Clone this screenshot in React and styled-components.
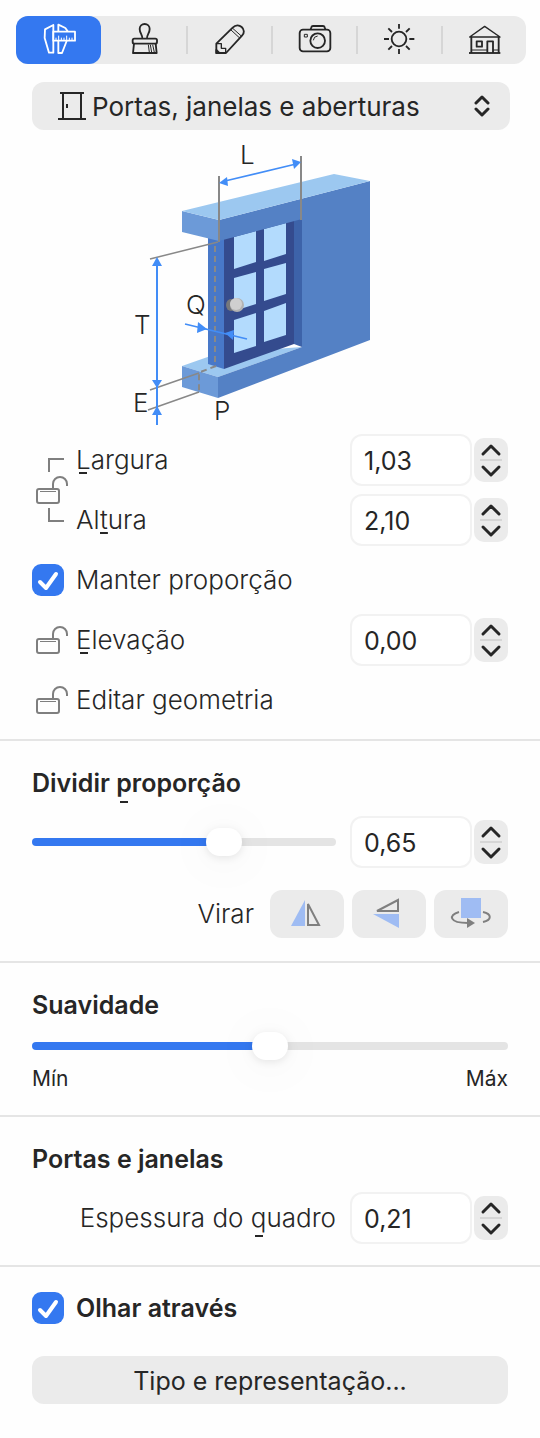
import React from "react";
import styled, { createGlobalStyle, css } from "styled-components";

const GlobalStyle = createGlobalStyle`
  * {
    box-sizing: border-box;
  }
  body {
    margin: 0;
    background: #fefefe;
    color: #262626;
    font-family: Inter, "Liberation Sans", sans-serif;
    font-size: 25px;
  }
  button, input, select {
    font: inherit;
    color: inherit;
    margin: 0;
  }
`;

const Panel = styled.main`
  padding-top: 16px;
`;

const Toolbar = styled.div`
  display: grid;
  grid-template-columns: repeat(6, 1fr);
  height: 48px;
  margin: 0 14px 18px 16px;
  border-radius: 12px;
  background: #ebebeb;
`;

const Tab = styled.button`
  display: flex;
  align-items: center;
  justify-content: center;
  padding: 0;
  border: 0;
  border-radius: 12px;
  background: ${(props) => (props.$active ? "#3478f0" : "transparent")};
  color: ${(props) => (props.$active ? "#fff" : "#262626")};
  ${(props) =>
    props.$divider &&
    css`
      border-radius: 0;
      background: linear-gradient(#d6d6d6, #d6d6d6) left center / 2px 28px no-repeat;
    `}
`;

const TabSvg = styled.svg`
  width: 34px;
  height: 34px;
  overflow: visible;
  fill: none;
  stroke: currentColor;
  stroke-width: 5.5;
  stroke-linejoin: round;
`;

const SelectBox = styled.div`
  position: relative;
  margin: 0 30px 10px 32px;
`;

const Select = styled.select`
  appearance: none;
  display: block;
  width: 100%;
  height: 48px;
  padding: 0 48px 0 60px;
  border: 0;
  border-radius: 12px;
  background: #ebebeb;
  font-size: 26px;
`;

const SelectIcon = styled.svg`
  position: absolute;
  top: 50%;
  transform: translateY(-50%);
  ${(props) => props.$side}: ${(props) => (props.$side === "left" ? 26 : 20)}px;
  pointer-events: none;
  fill: none;
  stroke: #262626;
`;

const Drawing = styled.svg`
  display: block;
  margin: 0 auto;
  font-size: 26px;
  font-weight: 300;
  fill: #262626;
`;

const Section = styled.section`
  padding: ${(props) => props.$top ?? 26}px 32px ${(props) => props.$bottom}px;
  & + & {
    border-top: 2px solid #e5e5e5;
  }
`;

const Title = styled.h2`
  margin: 0;
  font-size: 25px;
  line-height: 32px;
  font-weight: 600;
`;

const Row = styled.div`
  display: flex;
  align-items: center;
  height: 60px;
`;

const SpacedRow = styled(Row)`
  margin-top: 13px;
  gap: 14px;
`;

const Linked = styled.div`
  display: grid;
  grid-template-columns: 44px 1fr;
`;

const LinkCell = styled.div`
  display: flex;
  align-items: center;
  padding-left: 4px;
`;

const Label = styled.label`
  flex: ${(props) => (props.$end ? "1" : "0 1 auto")};
  margin-right: ${(props) => (props.$end ? "0" : "auto")};
  line-height: 32px;
  text-align: ${(props) => (props.$end ? "right" : "left")};
  font-size: ${(props) => (props.$bold ? 25 : 26)}px;
  font-weight: ${(props) => (props.$bold ? 600 : 300)};
`;

// short mnemonic dash, placed lower for letters with a descender
const Key = styled.u`
  padding-bottom: 6px;
  text-decoration: none;
  background: linear-gradient(#262626, #262626) center ${(props) => (props.$low ? 33 : 28)}px / 8px 2px
    no-repeat;
`;

const Lock = styled.button`
  display: flex;
  flex: none;
  width: 44px;
  padding: 0 0 0 4px;
  border: 0;
  background: none;
`;

const LineSvg = styled.svg`
  display: block;
  fill: none;
  stroke: #7f7f7f;
  stroke-width: 2;
`;

const Spinner = styled.div`
  display: flex;
  flex: none;
  align-items: center;
  gap: 2px;
`;

const Field = styled.input`
  width: 122px;
  height: 52px;
  padding: 2px 12px 0;
  border: 2px solid #f2f2f2;
  border-radius: 12px;
  background: #fff;
`;

const Stepper = styled.div`
  width: 34px;
  border-radius: 10px;
  background: linear-gradient(#d6d6d6, #d6d6d6) center / 22px 2px no-repeat #ebebeb;
`;

const Step = styled.button`
  display: block;
  width: 34px;
  height: 22px;
  padding: 0;
  border: 0;
  background: none;
`;

const StepSvg = styled.svg`
  display: block;
  fill: none;
  stroke: #262626;
  stroke-width: 3;
  stroke-linecap: round;
  stroke-linejoin: round;
`;

const CheckBox = styled.span`
  display: grid;
  flex: none;
  margin-right: 12px;
  & > * {
    grid-area: 1 / 1;
  }
`;

const CheckInput = styled.input`
  appearance: none;
  width: 32px;
  height: 32px;
  border-radius: 9px;
  background: #dcdcdc;
  &:checked {
    background: #3478f0;
  }
`;

const CheckMark = styled.svg`
  pointer-events: none;
  visibility: hidden;
  fill: none;
  stroke: #fff;
  stroke-width: 4;
  stroke-linecap: round;
  stroke-linejoin: round;
  input:checked + & {
    visibility: visible;
  }
`;

const Range = styled.input`
  appearance: none;
  display: block;
  flex: 1;
  width: 100%;
  min-width: 0;
  height: 28px;
  background: none;
  &::-webkit-slider-runnable-track {
    height: 8px;
    border-radius: 4px;
    background: linear-gradient(to right, #3478f0 var(--fill), #e4e4e4 var(--fill));
  }
  &::-webkit-slider-thumb {
    appearance: none;
    width: 36px;
    height: 28px;
    margin-top: -10px;
    border-radius: 14px;
    background: #fff;
    box-shadow: 0 2px 8px #00000018, 0 4px 50px 8px #00000008;
  }
`;

const Smoothness = styled.div`
  margin-top: 11px;
`;

const Ends = styled.div`
  display: flex;
  justify-content: space-between;
  margin-top: 4px;
  font-size: 21px;
  line-height: 30px;
`;

const FlipRow = styled.div`
  display: flex;
  align-items: center;
  justify-content: flex-end;
  gap: 8px;
  margin-top: 18px;
`;

const FlipText = styled.span`
  margin-right: 8px;
  font-size: 26px;
  line-height: 32px;
  font-weight: 300;
`;

const FlipButton = styled.button`
  width: 74px;
  height: 48px;
  padding: 0;
  border: 0;
  border-radius: 12px;
  background: #ebebeb;
`;

const FlipSvg = styled.svg`
  display: block;
`;

const WideButton = styled.button`
  display: block;
  width: 100%;
  height: 48px;
  margin-top: 18px;
  padding: 2px 0 0;
  border: 0;
  border-radius: 12px;
  background: #ebebeb;
`;

const tabs = [
  {
    name: "Dimensões",
    icon: (
      <>
        <path d="M36 7L11 20L10 46L23 90H36z" />
        <path d="M51 27V6L72 16L79 26M51 55V91H62L76 55" />
        <path d="M36 27H101V54H36z" fill="#3478f0" />
        <path d="M44 53V45M52 53V39M60 53V45M68 53V45M76 53V39M84 53V45M92 53V45" strokeWidth="3" />
      </>
    ),
  },
  {
    name: "Materiais",
    icon: (
      <>
        <path d="M48 48C49 36 40 32 40 19A15 15 0 0 1 70 19C70 32 61 36 62 48" />
        <rect x="19" y="48" width="73" height="15" rx="5" />
        <path d="M23 63L20 91H91L88 63" />
        <path d="M66 66L69 89M72 66L76 89M79 66L84 89" strokeWidth="3" />
      </>
    ),
  },
  {
    name: "Editar",
    icon: (
      <>
        <path d="M15 91V63L64 15C73 6 84 7 91 13C99 20 100 31 92 39L44 91z" />
        <path d="M16 63H30V77H43V90" strokeWidth="4" />
        <path d="M58 21L86 47M63 16L91 41" strokeWidth="3" />
        <path d="M15 82L24 91H15z" fill="currentColor" />
      </>
    ),
  },
  {
    name: "Câmera",
    icon: (
      <>
        <rect x="10" y="21" width="92" height="65" rx="10" />
        <path d="M43 20L45 14Q46 10 50 10H80Q84 10 85 14L87 20" />
        <circle cx="64" cy="54" r="22" />
        <path d="M51 53A14 14 0 0 1 64 40" strokeWidth="3" />
        <rect x="24" y="35" width="9" height="8" strokeWidth="3" />
      </>
    ),
  },
  {
    name: "Luz",
    icon: (
      <>
        <circle cx="53" cy="49" r="22" />
        <path d="M53 4V18M53 79V94M8 49H23M84 49H99M21 17L32 28M74 70L85 81M21 81L32 70M74 28L85 17" />
      </>
    ),
  },
  {
    name: "Projeto",
    icon: (
      <>
        <path d="M10 43L55 11L101 43z" strokeWidth="4" />
        <path d="M15 43V91M97 43V91" />
        <path d="M8 91H102" />
        <rect x="31" y="56" width="16" height="16" />
        <path d="M63 91V56H80V91" />
        <path d="M15 82H63M80 82H97" strokeWidth="3" />
      </>
    ),
  },
];

function WallDrawing() {
  return (
    <Drawing width="280" height="290" viewBox="130 140 280 290">
      <path d="M182 366L219 353L302 347L218 377z" fill="#9cc8f0" />
      <path d="M182 366L218 377V398L182 387z" fill="#6c9ad8" />
      <path d="M208 236L224 236V369L208 364z" fill="#4878c8" />
      <path d="M224 236L294 218V344L224 369z" fill="#344b8e" />
      <path d="M294 218H302V347L294 344z" fill="#3d63a9" />
      <g fill="#b3dbfd">
        <path d="M234 237L256 231V262L234 269z" />
        <path d="M264 229L286 223V254L264 261z" />
        <path d="M234 278L256 272V304L234 311z" />
        <path d="M264 269L286 263V294L264 301z" />
        <path d="M234 320L256 313V346L234 353z" />
        <path d="M264 311L286 303V335L264 342z" />
      </g>
      <path
        d="M219 220L370 181V340L218 398V377L302 347V219L219 241z"
        fill="#5481c5"
      />
      <path d="M182 211L219 220V241L182 232z" fill="#6c9ad8" />
      <path d="M182 211L334 174L370 181L219 220z" fill="#9cc8f0" />
      <ellipse cx="231" cy="305" rx="5" ry="6" fill="#76787b" />
      <circle cx="237" cy="305" r="7" fill="#b2b2b2" />
      <circle cx="236" cy="304" r="6" fill="#cfcfcf" />
      <g fill="none" stroke="#888" strokeWidth="2">
        <path d="M219 176V242M301 156V220" />
        <path d="M150 259L218 242M150 390L199 373M148 410L199 392" strokeWidth="1.5" />
        <path d="M215 246V364" strokeDasharray="6 4" />
        <path d="M216 366L199 372.500V391" strokeDasharray="6 4" />
      </g>
      <g fill="none" stroke="#428df7" strokeWidth="1.6">
        <path d="M225 181L296 164" />
        <path d="M157 262V425" strokeWidth="2" />
        <path d="M185 324L247 339" />
      </g>
      <g fill="#428df7">
        <path d="M219 183L227 177L228 186z" />
        <path d="M301 162L292 159L294 169z" />
        <path d="M157 257L162 266H152z" />
        <path d="M157 388L162 380H152z" />
        <path d="M157 406L162 415H152z" />
        <path d="M207 329L198 322L197 333z" />
        <path d="M225 333L234 330L233 340z" />
      </g>
      <text x="240" y="164">L</text>
      <text x="134" y="334">T</text>
      <text x="186" y="314">Q</text>
      <text x="133" y="412">E</text>
      <text x="214" y="420">P</text>
    </Drawing>
  );
}

function UnlockButton({ name }) {
  return (
    <Lock type="button" aria-label={name}>
      <LineSvg width="32" height="28">
        <rect x="1" y="13" width="22" height="14" rx="2" />
        <path d="M17 12V8A7 7 0 0 1 31 8V10" />
        <path d="M4 15.500H20" strokeWidth="1" />
      </LineSvg>
    </Lock>
  );
}

function LinkedLock() {
  return (
    <LinkCell>
      <LineSvg width="32" height="64">
        <path d="M13 14V1H28M13 50V63H28" />
        <rect x="1" y="31" width="22" height="14" rx="2" />
        <path d="M17 30V26A7 7 0 0 1 31 26V28" />
        <path d="M4 33.500H20" strokeWidth="1" />
      </LineSvg>
    </LinkCell>
  );
}

function NumberField({ id, value, label }) {
  return (
    <Spinner>
      <Field id={id} defaultValue={value} aria-label={label} inputMode="decimal" />
      <Stepper>
        <Step type="button" aria-label="Aumentar">
          <StepSvg width="34" height="22">
            <path d="M9 16L17 8L25 16" />
          </StepSvg>
        </Step>
        <Step type="button" aria-label="Diminuir">
          <StepSvg width="34" height="22">
            <path d="M9 7L17 15L25 7" />
          </StepSvg>
        </Step>
      </Stepper>
    </Spinner>
  );
}

function Check({ id }) {
  return (
    <CheckBox>
      <CheckInput type="checkbox" id={id} defaultChecked />
      <CheckMark width="32" height="32">
        <path d="M8 18L14 24L24 10" />
      </CheckMark>
    </CheckBox>
  );
}

function Slider({ label, initial }) {
  const [value, setValue] = React.useState(initial);
  return (
    <Range
      type="range"
      min="0"
      max="100"
      value={value}
      aria-label={label}
      onChange={(e) => setValue(e.target.value)}
      style={{ "--fill": `${value}%` }}
    />
  );
}

function App() {
  const [tab, setTab] = React.useState(0);
  return (
    <Panel>
      <GlobalStyle />
      <Toolbar>
        {tabs.map((item, i) => (
          <Tab
            key={item.name}
            type="button"
            aria-label={item.name}
            $active={i === tab}
            $divider={i !== tab && i > 0 && i - 1 !== tab}
            onClick={() => setTab(i)}
          >
            <TabSvg viewBox="2 1 102 102">{item.icon}</TabSvg>
          </Tab>
        ))}
      </Toolbar>

      <SelectBox>
        <Select aria-label="Categoria">
          <option>Portas, janelas e aberturas</option>
        </Select>
        <SelectIcon $side="left" width="28" height="28" strokeWidth="2">
          <path d="M2 1H26M5 1V27M23 1V27M0 27H28M9 12V16" />
        </SelectIcon>
        <SelectIcon
          $side="right"
          width="16"
          height="22"
          strokeWidth="3"
          strokeLinecap="round"
          strokeLinejoin="round"
        >
          <path d="M2 8L8 2L14 8M2 14L8 20L14 14" />
        </SelectIcon>
      </SelectBox>

      <WallDrawing />

      <Section $top={0} $bottom={9}>
        <Linked>
          <LinkedLock />
          <div>
            <Row>
              <Label htmlFor="largura">
                <Key>L</Key>argura
              </Label>
              <NumberField id="largura" value="1,03" />
            </Row>
            <Row>
              <Label htmlFor="altura">
                Al<Key>t</Key>ura
              </Label>
              <NumberField id="altura" value="2,10" />
            </Row>
          </div>
        </Linked>
        <Row>
          <Check id="manter" />
          <Label htmlFor="manter">Manter proporção</Label>
        </Row>
        <Row>
          <UnlockButton name="Bloquear elevação" />
          <Label htmlFor="elevacao">
            <Key>E</Key>levação
          </Label>
          <NumberField id="elevacao" value="0,00" />
        </Row>
        <Row>
          <UnlockButton name="Bloquear geometria" />
          <Label as="span">Editar geometria</Label>
        </Row>
      </Section>

      <Section $bottom={23}>
        <Title>
          Dividir <Key $low>p</Key>roporção
        </Title>
        <SpacedRow>
          <Slider label="Dividir proporção" initial={65} />
          <NumberField value="0,65" label="Dividir proporção" />
        </SpacedRow>
        <FlipRow>
          <FlipText>Virar</FlipText>
          <FlipButton type="button" aria-label="Virar na horizontal">
            <FlipSvg width="74" height="48">
              <path d="M35 10V36H21z" fill="#9fbcf3" />
              <path d="M38 14V35H49z" fill="none" stroke="#7f7f7f" strokeWidth="2" />
            </FlipSvg>
          </FlipButton>
          <FlipButton type="button" aria-label="Virar na vertical">
            <FlipSvg width="74" height="48">
              <path d="M46 10V21H25z" fill="none" stroke="#7f7f7f" strokeWidth="2" />
              <path d="M21 24H47V38z" fill="#9fbcf3" />
            </FlipSvg>
          </FlipButton>
          <FlipButton type="button" aria-label="Girar">
            <FlipSvg width="74" height="48">
              <rect x="27" y="8" width="20" height="20" fill="#9fbcf3" />
              <path
                d="M25 22C14 25 15 33 34 33M49 22C58 24 58 30 49 32"
                fill="none"
                stroke="#7f7f7f"
                strokeWidth="2"
              />
              <path d="M33 28V38L41 33z" fill="#7f7f7f" />
            </FlipSvg>
          </FlipButton>
        </FlipRow>
      </Section>

      <Section $bottom={21}>
        <Title>Suavidade</Title>
        <Smoothness>
          <Slider label="Suavidade" initial={50} />
          <Ends>
            <span>Mín</span>
            <span>Máx</span>
          </Ends>
        </Smoothness>
      </Section>

      <Section $bottom={17}>
        <Title>Portas e janelas</Title>
        <SpacedRow>
          <Label htmlFor="espessura" $end>
            Espessura do <Key $low>q</Key>uadro
          </Label>
          <NumberField id="espessura" value="0,21" />
        </SpacedRow>
      </Section>

      <Section $top={11} $bottom={34}>
        <Row>
          <Check id="olhar" />
          <Label htmlFor="olhar" $bold>
            Olhar através
          </Label>
        </Row>
        <WideButton type="button">Tipo e representação...</WideButton>
      </Section>
    </Panel>
  );
}

export default App;
